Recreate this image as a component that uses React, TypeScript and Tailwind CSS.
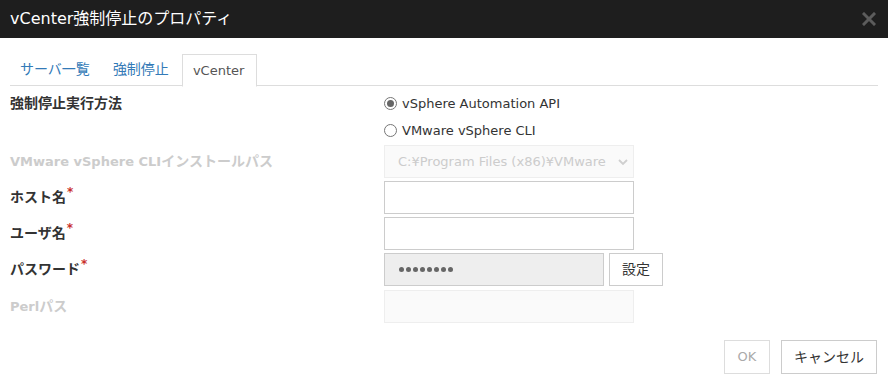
import React from "react";

const font = { fontFamily: '"DejaVu Sans", "Noto Sans CJK JP", sans-serif' };

function Req() {
  return <span className="text-[#c9302c] text-[12px] align-top relative top-[-4px] ml-[1px] font-bold">*</span>;
}

function Radio({ checked, label }: { checked?: boolean; label: string }) {
  return (
    <div className="flex items-center h-[27px]">
      <span className="w-[13px] h-[13px] rounded-full border border-[#767676] bg-white flex items-center justify-center">
        {checked && <span className="w-[7px] h-[7px] rounded-full bg-[#666]" />}
      </span>
      <span className="ml-[5px] text-[13px] text-[#333]">{label}</span>
    </div>
  );
}

function Row({ label, children, disabled, req, className = "" }: { label: React.ReactNode; children: React.ReactNode; disabled?: boolean; req?: boolean; className?: string }) {
  return (
    <div className={"flex items-center " + className}>
      <div className={"w-[374px] text-[14px] font-bold " + (disabled ? "text-[#cccccc]" : "text-[#333]")}>
        {label}
        {req && <Req />}
      </div>
      <div className="flex items-center">{children}</div>
    </div>
  );
}

export default function App() {
  const dots = [0, 1, 2, 3, 4, 5, 6, 7];
  return (
    <div className="w-[888px] h-[377px] bg-white overflow-hidden relative" style={font}>
      <div className="h-[38px] bg-[#1e1e1e] flex items-center justify-between pl-[10px] pr-[12px]">
        <span className="text-white text-[16px]">vCenter強制停止のプロパティ</span>
        <svg width="14" height="14" viewBox="0 0 14 14">
          <path d="M2 2 L12 12 M12 2 L2 12" stroke="#5c5c5c" strokeWidth="3" strokeLinecap="square" />
        </svg>
      </div>
      <div className="mx-[10px] mt-[16px] border-b border-[#dddddd] flex h-[32px]">
        <div className="px-[10px] flex items-center text-[14px] text-[#337ab7] mr-[3px]">サーバ一覧</div>
        <div className="px-[10px] flex items-center text-[14px] text-[#337ab7] mr-[3px]">強制停止</div>
        <div className="px-[10px] flex items-center text-[13px] text-[#555] border border-[#dddddd] border-b-white bg-white h-[33px] w-[75px]">vCenter</div>
      </div>
      <div className="px-[10px] pt-[4px]">
        <div className="flex">
          <div className="w-[374px] text-[14px] font-bold text-[#333] h-[27px] flex items-center">強制停止実行方法</div>
          <div className="flex flex-col">
            <Radio checked label="vSphere Automation API" />
            <Radio label="VMware vSphere CLI" />
          </div>
        </div>
        <Row label={<><span className="text-[13px]">VMware vSphere CLI</span>インストールパス</>} disabled className="mt-[1px]">
          <div className="w-[250px] h-[33px] bg-[#fafafa] border border-[#eeeeee] flex items-center pl-[13px] pr-[5px]">
            <span className="text-[13px] text-[#cccccc] whitespace-nowrap overflow-hidden flex-1">C:¥Program Files (x86)¥VMware</span>
            <svg width="10" height="8" viewBox="0 0 10 8" className="ml-[1px] shrink-0">
              <path d="M1 2 L5 6 L9 2" stroke="#cfcfcf" strokeWidth="1.8" fill="none" />
            </svg>
          </div>
        </Row>
        <Row label="ホスト名" req className="mt-[3px]">
          <div className="w-[250px] h-[33px] bg-white border border-[#cccccc]" />
        </Row>
        <Row label="ユーザ名" req className="mt-[3px]">
          <div className="w-[250px] h-[33px] bg-white border border-[#cccccc]" />
        </Row>
        <Row label="パスワード" req className="mt-[3px]">
          <div className="w-[220px] h-[33px] bg-[#eeeeee] border border-[#cccccc] flex items-center pl-[14px] gap-[2px]">
            {dots.map((d) => (
              <span key={d} className="w-[5px] h-[5px] rounded-full bg-[#666]" />
            ))}
          </div>
          <div className="ml-[5px] w-[54px] h-[33px] bg-white border border-[#cccccc] flex items-center justify-center text-[14px] text-[#333]">設定</div>
        </Row>
        <Row label={<><span className="text-[13px]">Perl</span>パス</>} disabled className="mt-[4px]">
          <div className="w-[250px] h-[33px] bg-[#fafafa] border border-[#eeeeee]" />
        </Row>
      </div>
      <div className="flex justify-end pr-[11px] mt-[17px] gap-[11px]">
        <div className="w-[46px] h-[34px] border border-[#dddddd] bg-white flex items-center justify-center text-[13px] text-[#aaaaaa]">OK</div>
        <div className="w-[96px] h-[34px] border border-[#cccccc] bg-white flex items-center justify-center text-[14px] text-[#333]">キャンセル</div>
      </div>
    </div>
  );
}
